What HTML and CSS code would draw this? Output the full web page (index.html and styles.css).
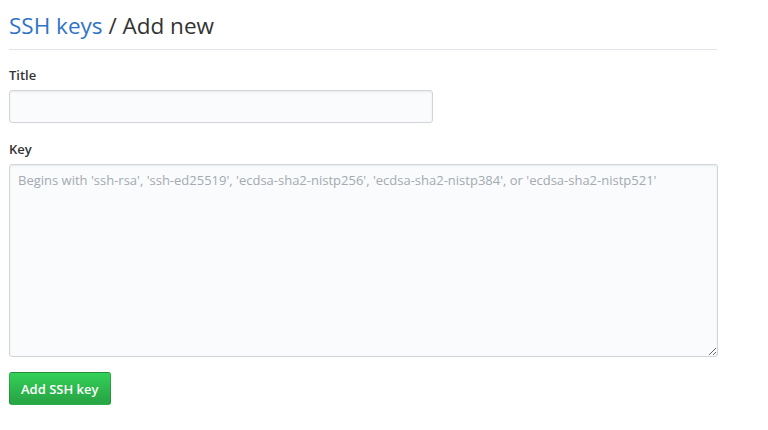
FILE: index.html
```html
<!DOCTYPE html>
<html>
<head>
<meta charset="utf-8">
<link rel="stylesheet" href="styles.css">
</head>
<body>
<div class="page">
  <h2 class="subhead"><a class="crumb" href="#">SSH keys</a> / Add new</h2>
  <form class="form">
    <div class="group">
      <label class="label" for="title">Title</label>
      <input class="input title-input" id="title" type="text">
    </div>
    <div class="group group-last">
      <label class="label" for="key">Key</label>
      <textarea class="input key-input" id="key" placeholder="Begins with 'ssh-rsa', 'ssh-ed25519', 'ecdsa-sha2-nistp256', 'ecdsa-sha2-nistp384', or 'ecdsa-sha2-nistp521'"></textarea>
    </div>
    <button class="btn" type="button">Add SSH key</button>
  </form>
</div>
</body>
</html>
```
FILE: styles.css
```css
html, body {
  margin: 0;
  padding: 0;
  background: #fff;
}
body {
  font-family: "Open Sans", "Noto Sans", sans-serif;
  color: #24292e;
  font-size: 14px;
}
.page {
  width: 708px;
  padding: 8px 0 0 9px;
}
.subhead {
  margin: 0;
  font-size: 22.5px;
  font-weight: 400;
  line-height: 35px;
  padding-bottom: 6px;
  border-bottom: 1px solid #e1e4e8;
  color: #333;
}
.crumb {
  color: #2f74c6;
  text-decoration: none;
}
.form {
  padding-top: 15px;
}
.group {
  margin-bottom: 16px;
}
.group-last {
  margin-bottom: 15px;
}
.label {
  display: block;
  font-weight: 600;
  font-size: 13px;
  line-height: 20px;
  margin-bottom: 5px;
  color: #333;
}
.input {
  display: block;
  box-sizing: border-box;
  background: #fafbfc;
  border: 1px solid #d1d5da;
  border-radius: 3px;
  box-shadow: inset 0 1px 2px rgba(27,31,35,0.075);
  font-family: inherit;
  font-size: 13px;
  padding: 6px 8px;
  color: #24292e;
  outline: none;
}
.title-input {
  width: 424px;
  height: 33px;
}
.key-input {
  width: 709px;
  height: 193px;
  resize: vertical;
}
.key-input::placeholder {
  color: #a3aab1;
}
.btn {
  display: block;
  height: 33px;
  padding: 0 11px;
  font-family: inherit;
  font-size: 13px;
  font-weight: 600;
  color: #fff;
  background: linear-gradient(-180deg, #34d058 0%, #28a745 90%);
  border: 1px solid rgba(27,31,35,0.2);
  border-radius: 3px;
  cursor: pointer;
}
```
